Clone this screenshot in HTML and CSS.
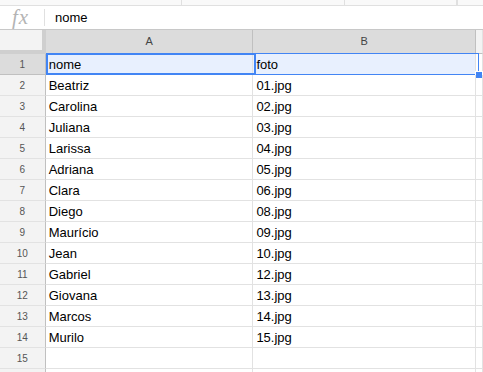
FILE: index.html
```html
<!DOCTYPE html>
<html lang="pt">
<head>
    <meta charset="UTF-8">
    <title>Planilha</title>
    <link rel="stylesheet" href="styles.css">
</head>
<body>
    <div class="toolbar">
        <span class="tool t1"></span>
        <span class="tool t2"></span>
        <span class="tool t3"></span>
        <span class="tool t4"></span>
    </div>

    <div class="formula-bar">
        <span class="fx">fx</span>
        <span class="divider"></span>
        <span class="formula">nome</span>
    </div>

    <div class="sheet">
        <div class="row head">
            <div class="corner"></div>
            <div class="cell col-a col-head">A</div>
            <div class="cell col-b col-head">B</div>
            <div class="cell col-c col-head-c"></div>
        </div>
        <div id="linhas"></div>
    </div>

    <script>
        const dados = [
            ['nome', 'foto'],
            ['Beatriz', '01.jpg'],
            ['Carolina', '02.jpg'],
            ['Juliana', '03.jpg'],
            ['Larissa', '04.jpg'],
            ['Adriana', '05.jpg'],
            ['Clara', '06.jpg'],
            ['Diego', '08.jpg'],
            ['Maurício', '09.jpg'],
            ['Jean', '10.jpg'],
            ['Gabriel', '12.jpg'],
            ['Giovana', '13.jpg'],
            ['Marcos', '14.jpg'],
            ['Murilo', '15.jpg'],
            ['', ''],
            ['', '']
        ];

        const linhas = document.getElementById('linhas');

        dados.forEach((linha, i) => {
            const row = document.createElement('div');
            row.classList.add('row');
            if (i === 0) row.classList.add('selected');
            // a linha 16 fica cortada na borda, sem número visível
            const num = i < 15 ? i + 1 : '';
            row.innerHTML = `
                <div class="row-num">${num}</div>
                <div class="cell col-a">${linha[0]}</div>
                <div class="cell col-b">${linha[1]}</div>
                <div class="cell col-c"></div>
            `;
            if (i === 0) {
                row.innerHTML += `
                    <div class="range"></div>
                    <div class="active"></div>
                    <div class="handle"></div>
                `;
            }
            linhas.appendChild(row);
        });
    </script>
</body>
</html>
```

FILE: styles.css
```css
body {
    margin: 0;
    font-family: "Liberation Sans", Arial, sans-serif;
    background-color: #fff;
    overflow: hidden;
}

.toolbar {
    height: 5px;
    background-color: #f9f9f9;
    border-bottom: 1px solid #e0e0e0;
    display: flex;
}

.tool {
    height: 5px;
    border-right: 1px solid #e0e0e0;
}

.t1 { width: 181px; }
.t2 { width: 162px; }
.t3 { width: 111px; }

.formula-bar {
    height: 23px;
    display: flex;
    align-items: center;
    background-color: #fff;
}

.fx {
    font-family: "Liberation Serif", serif;
    font-style: italic;
    font-size: 21px;
    color: #b4b4b4;
    width: 32px;
    padding-left: 12px;
    letter-spacing: 1px;
    line-height: 23px;
}

.divider {
    width: 1px;
    height: 17px;
    background-color: #e0e0e0;
}

.formula {
    font-size: 13px;
    color: #000;
    padding-left: 10px;
}

.sheet {
    border-top: 1px solid #c8c8c8;
}

.row {
    display: flex;
    height: 21px;
    position: relative;
}

.row.head {
    height: 24px;
}

.corner {
    width: 46px;
    height: 24px;
    box-sizing: border-box;
    background-color: #f3f3f3;
    border-right: 4px solid #cfcfcf;
    border-bottom: 4px solid #cfcfcf;
}

.cell {
    box-sizing: border-box;
    height: 21px;
    border-right: 1px solid #e2e2e2;
    border-bottom: 1px solid #e2e2e2;
    padding: 0 3px;
    font-size: 13px;
    line-height: 21px;
    color: #000;
    white-space: nowrap;
}

.col-a { width: 209px; }
.col-b { width: 224px; }
.col-c { flex: 1; }

.col-head {
    height: 24px;
    background-color: #dcdcdc;
    border-right: 1px solid #c0c0c0;
    border-bottom: 1px solid #c0c0c0;
    text-align: center;
    font-size: 11px;
    line-height: 23px;
    color: #444;
}

.col-head-c {
    height: 24px;
    background-color: #f3f3f3;
    border-bottom: 1px solid #c0c0c0;
}

.row-num {
    width: 46px;
    height: 21px;
    box-sizing: border-box;
    background-color: #f3f3f3;
    border-right: 1px solid #c0c0c0;
    border-bottom: 1px solid #e2e2e2;
    text-align: center;
    font-size: 10px;
    line-height: 21px;
    color: #555;
}

.selected .row-num {
    background-color: #dcdcdc;
    border-bottom-color: #c0c0c0;
}

.selected .col-a,
.selected .col-b {
    background-color: #e8f0fe;
}

.range {
    position: absolute;
    left: 46px;
    top: -1px;
    width: 433px;
    height: 22px;
    box-sizing: border-box;
    border: 1px solid #4285f4;
}

.active {
    position: absolute;
    left: 46px;
    top: -1px;
    width: 210px;
    height: 22px;
    box-sizing: border-box;
    border: 2px solid #4285f4;
}

.handle {
    position: absolute;
    left: 475px;
    top: 17px;
    width: 6px;
    height: 6px;
    background-color: #4285f4;
    border: 1px solid #fff;
}
```
